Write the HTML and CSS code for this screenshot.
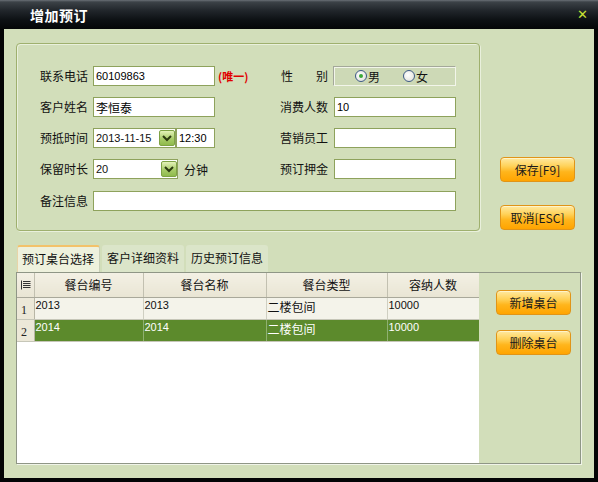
FILE: index.html
```
<!DOCTYPE html>
<html lang="zh">
<head>
<meta charset="utf-8">
<title>增加预订</title>
<link rel="stylesheet" href="styles.css">
</head>
<body>
<div class="window">
  <div class="titlebar">
    <span class="title">增加预订</span>
    <span class="close">✕</span>
  </div>
  <div class="client">
    <div class="top">
      <div class="group">
        <label class="lbl">联系电话</label>
        <div class="field">
          <input class="inp w122" type="text" value="60109863" readonly>
          <span class="unique">(唯一)</span>
        </div>
        <label class="lbl spread"><span>性</span><span>别</span></label>
        <div class="radios">
          <span class="radio on"></span><span class="rtext">男</span>
          <span class="radio"></span><span class="rtext">女</span>
        </div>

        <label class="lbl">客户姓名</label>
        <div class="field"><input class="inp w122 cjk" type="text" value="李恒泰" readonly></div>
        <label class="lbl">消费人数</label>
        <div class="field"><input class="inp w122" type="text" value="10" readonly></div>

        <label class="lbl">预抵时间</label>
        <div class="field">
          <div class="combo w83"><span class="ctext">2013-11-15</span><span class="dd"><svg width="10" height="8" viewBox="0 0 10 8"><path d="M1 2 L5 6 L9 2" fill="none" stroke="#2c3a10" stroke-width="2"/></svg></span></div>
          <input class="inp w39" type="text" value="12:30" readonly>
        </div>
        <label class="lbl">营销员工</label>
        <div class="field"><input class="inp w122" type="text" value="" readonly></div>

        <label class="lbl">保留时长</label>
        <div class="field">
          <div class="combo w85"><span class="ctext">20</span><span class="dd"><svg width="10" height="8" viewBox="0 0 10 8"><path d="M1 2 L5 6 L9 2" fill="none" stroke="#2c3a10" stroke-width="2"/></svg></span></div>
          <span class="unit">分钟</span>
        </div>
        <label class="lbl">预订押金</label>
        <div class="field"><input class="inp w122" type="text" value="" readonly></div>

        <label class="lbl last">备注信息</label>
        <div class="field wide last"><input class="inp full" type="text" value="" readonly></div>
      </div>
      <div class="side">
        <button class="btn">保存[F9]</button>
        <button class="btn">取消[ESC]</button>
      </div>
    </div>

    <div class="tabs">
      <div class="tab active">预订桌台选择</div>
      <div class="tab">客户详细资料</div>
      <div class="tab">历史预订信息</div>
    </div>
    <div class="pane">
      <div class="grid">
        <table>
          <colgroup>
            <col class="c0"><col class="c1"><col class="c2"><col class="c3"><col class="c4">
          </colgroup>
          <thead>
            <tr>
              <th class="rn"><svg width="11" height="10" viewBox="0 0 11 10"><path d="M1.5 0.5 V9.5 M3 1.5 H10.5 M3 3.5 H10.5 M3 5.5 H10.5 M3 7.5 H10.5" stroke="#333" stroke-width="1" fill="none"/></svg></th>
              <th>餐台编号</th><th>餐台名称</th><th>餐台类型</th><th>容纳人数</th>
            </tr>
          </thead>
          <tbody>
            <tr class="r1">
              <td class="rn">1</td><td>2013</td><td>2013</td><td class="cjk">二楼包间</td><td>10000</td>
            </tr>
            <tr class="sel">
              <td class="rn">2</td><td>2014</td><td>2014</td><td class="cjk">二楼包间</td><td>10000</td>
            </tr>
          </tbody>
        </table>
      </div>
      <div class="pane-side">
        <button class="btn">新增桌台</button>
        <button class="btn">删除桌台</button>
      </div>
    </div>
  </div>
</div>
</body>
</html>
```

FILE: styles.css
```
* { box-sizing: border-box; }
html, body { margin: 0; padding: 0; }
body {
  width: 598px; height: 482px; overflow: hidden;
  background: #000;
  font-family: "Noto Sans CJK SC", "Liberation Sans", sans-serif;
  font-size: 12px; color: #111;
}
.window { width: 598px; height: 482px; display: flex; flex-direction: column; background: #030405; }
.titlebar {
  height: 29px; flex: none;
  display: flex; align-items: center; justify-content: space-between;
  padding: 0 10px 0 30px;
  background: linear-gradient(#6a7076 0, #3c4247 2px, #22272c 35%, #0c1013 70%, #040607 100%);
}
.title { color: #fff; font-weight: bold; font-size: 14px; letter-spacing: 0.5px; }
.close { color: #c8e232; font-weight: bold; font-size: 13px; font-family: "DejaVu Sans", sans-serif; }
.client {
  flex: 1; margin: 0 4px 4px 4px;
  background: #d2deba;
  padding: 14px 0 0 12px;
  display: flex; flex-direction: column;
}
.top { display: flex; }
.group {
  width: 464px; height: 188px;
  border: 1px solid #9fb06e; border-radius: 4px;
  box-shadow: inset 1px 1px 0 #e9f0dc, 1px 1px 0 #e9f0dc;
  padding: 22px 0 0 23px;
  display: grid;
  grid-template-columns: 53px 187px 54px 122px;
  grid-auto-rows: 20px;
  row-gap: 11px;
}
.lbl { line-height: 20px; font-size: 12px; white-space: nowrap; }
.lbl.spread { display: flex; justify-content: space-between; width: 48px; padding-left: 1px; }
.last { margin-top: 1px; }
.field { display: flex; align-items: center; }
.field.wide { grid-column: 2 / 5; }
.inp {
  height: 20px; border: 1px solid #8ea25c; background: #fff;
  padding: 0 2px; margin: 0;
  font-family: "Liberation Sans", "Noto Sans CJK SC", sans-serif;
  font-size: 11px; color: #000; outline: none;
}
.inp.cjk { font-family: "Noto Sans CJK SC", sans-serif; font-size: 12px; }
.w122 { width: 122px; }
.w39 { width: 39px; margin-left: 0; }
.full { width: 363px; }
.unique { color: #e00000; font-size: 11px; margin-left: 3px; font-weight: bold; }
.combo {
  height: 20px; border: 1px solid #8ea25c; background: #fff;
  display: flex; align-items: stretch;
}
.w83 { width: 83px; }
.w85 { width: 85px; }
.ctext {
  flex: 1; padding-left: 2px; line-height: 18px;
  font-family: "Liberation Sans", sans-serif; font-size: 11px;
}
.dd {
  width: 16px; margin: 1px 0 1px 0;
  background: linear-gradient(#e4f2b8, #a9cc6a 55%, #8fba4c);
  border: 1px solid #7ea244; border-radius: 2px;
  display: flex; align-items: center; justify-content: center;
}
.unit { margin-left: 6px; font-size: 12px; }
.radios {
  width: 123px; height: 20px; margin-left: -1px;
  border: 1px solid #a4a89a; border-right-color: #f2f5ea; border-bottom-color: #f2f5ea;
  box-shadow: inset 1px 1px 0 #f2f5ea;
  background: #cdd9b6;
  display: flex; align-items: center; padding-left: 21px;
}
.radio {
  width: 12px; height: 12px; border-radius: 50%;
  border: 1px solid #3d5a86;
  background: radial-gradient(circle at 40% 40%, #fff, #dcdcd4);
  position: relative;
}
.radio.on::after {
  content: ""; position: absolute; left: 3px; top: 3px;
  width: 4px; height: 4px; border-radius: 50%; background: #3aa838;
}
.rtext { margin-left: 1px; margin-right: 23px; font-size: 12px; }
.side {
  margin-left: 20px; padding-top: 114px;
  display: flex; flex-direction: column; gap: 23px;
}
.btn {
  width: 75px; height: 25px; padding: 0; margin: 0;
  border: 1px solid #e09418; border-radius: 4px;
  background: linear-gradient(#ffe9a0 0, #ffd25a 35%, #ffb51c 60%, #ffa400 100%);
  font-family: "Noto Sans CJK SC", sans-serif; font-size: 12px; color: #1a1a1a;
  box-shadow: inset 0 1px 0 #fff4c8;
}
.tabs { display: flex; margin-top: 14px; margin-left: 1px; height: 27px; gap: 2px; }
.tab {
  height: 27px; padding: 0 5px; line-height: 26px;
  font-size: 12px; background: #dbe5c9;
  border-top-left-radius: 3px; border-top-right-radius: 3px;
}
.tab.active {
  width: 83px;
  background: #eef1dd;
  border-top: 2px solid #f3c26a; border-left: 1px solid #e8d4a8; border-right: 1px solid #c9cfb8;
  line-height: 24px; padding: 0 4px;
}
.pane {
  width: 565px; height: 192px;
  border: 1px solid #8f9686;
  box-shadow: 1px 1px 0 #f0f4e8;
  display: flex;
}
.grid { width: 462px; height: 190px; background: #fff; }
.pane-side {
  flex: 1; background: #d2deba;
  padding: 17px 0 0 17px;
  display: flex; flex-direction: column; gap: 15px;
}
table { border-collapse: collapse; table-layout: fixed; width: 462px; }
.c0 { width: 17px; } .c1 { width: 109px; } .c2 { width: 123px; } .c3 { width: 121px; } .c4 { width: 92px; }
th {
  height: 24px; padding: 0; font-weight: normal; font-size: 12px;
  background: linear-gradient(#f3f0e4, #e9e5d4);
  border-right: 1px solid #c2c0b0; border-bottom: 1px solid #a9a89a;
  text-align: center;
}
th.rn { line-height: 0; }
td {
  height: 22px; padding: 1px 0 0 1px; vertical-align: top;
  font-family: "Liberation Sans", sans-serif; font-size: 11px;
  border-right: 1px solid #cfcfc2; border-bottom: 1px solid #c6c6b8;
  background: #f4f3ea; white-space: nowrap;
}
td.cjk { font-family: "Noto Sans CJK SC", sans-serif; font-size: 12px; padding-top: 0; }
td.rn {
  background: #ece8d8; vertical-align: bottom; padding: 0 0 1px 4px;
  font-family: "Liberation Serif", serif; font-size: 12px; color: #222;
  border-right: 1px solid #b8b6a6;
}
tr.sel td { background: #5c8a2c; color: #fff; border-right-color: #8fb070; }
tr.sel td.rn { background: #ece8d8; color: #222; border-right-color: #b8b6a6; }
```
